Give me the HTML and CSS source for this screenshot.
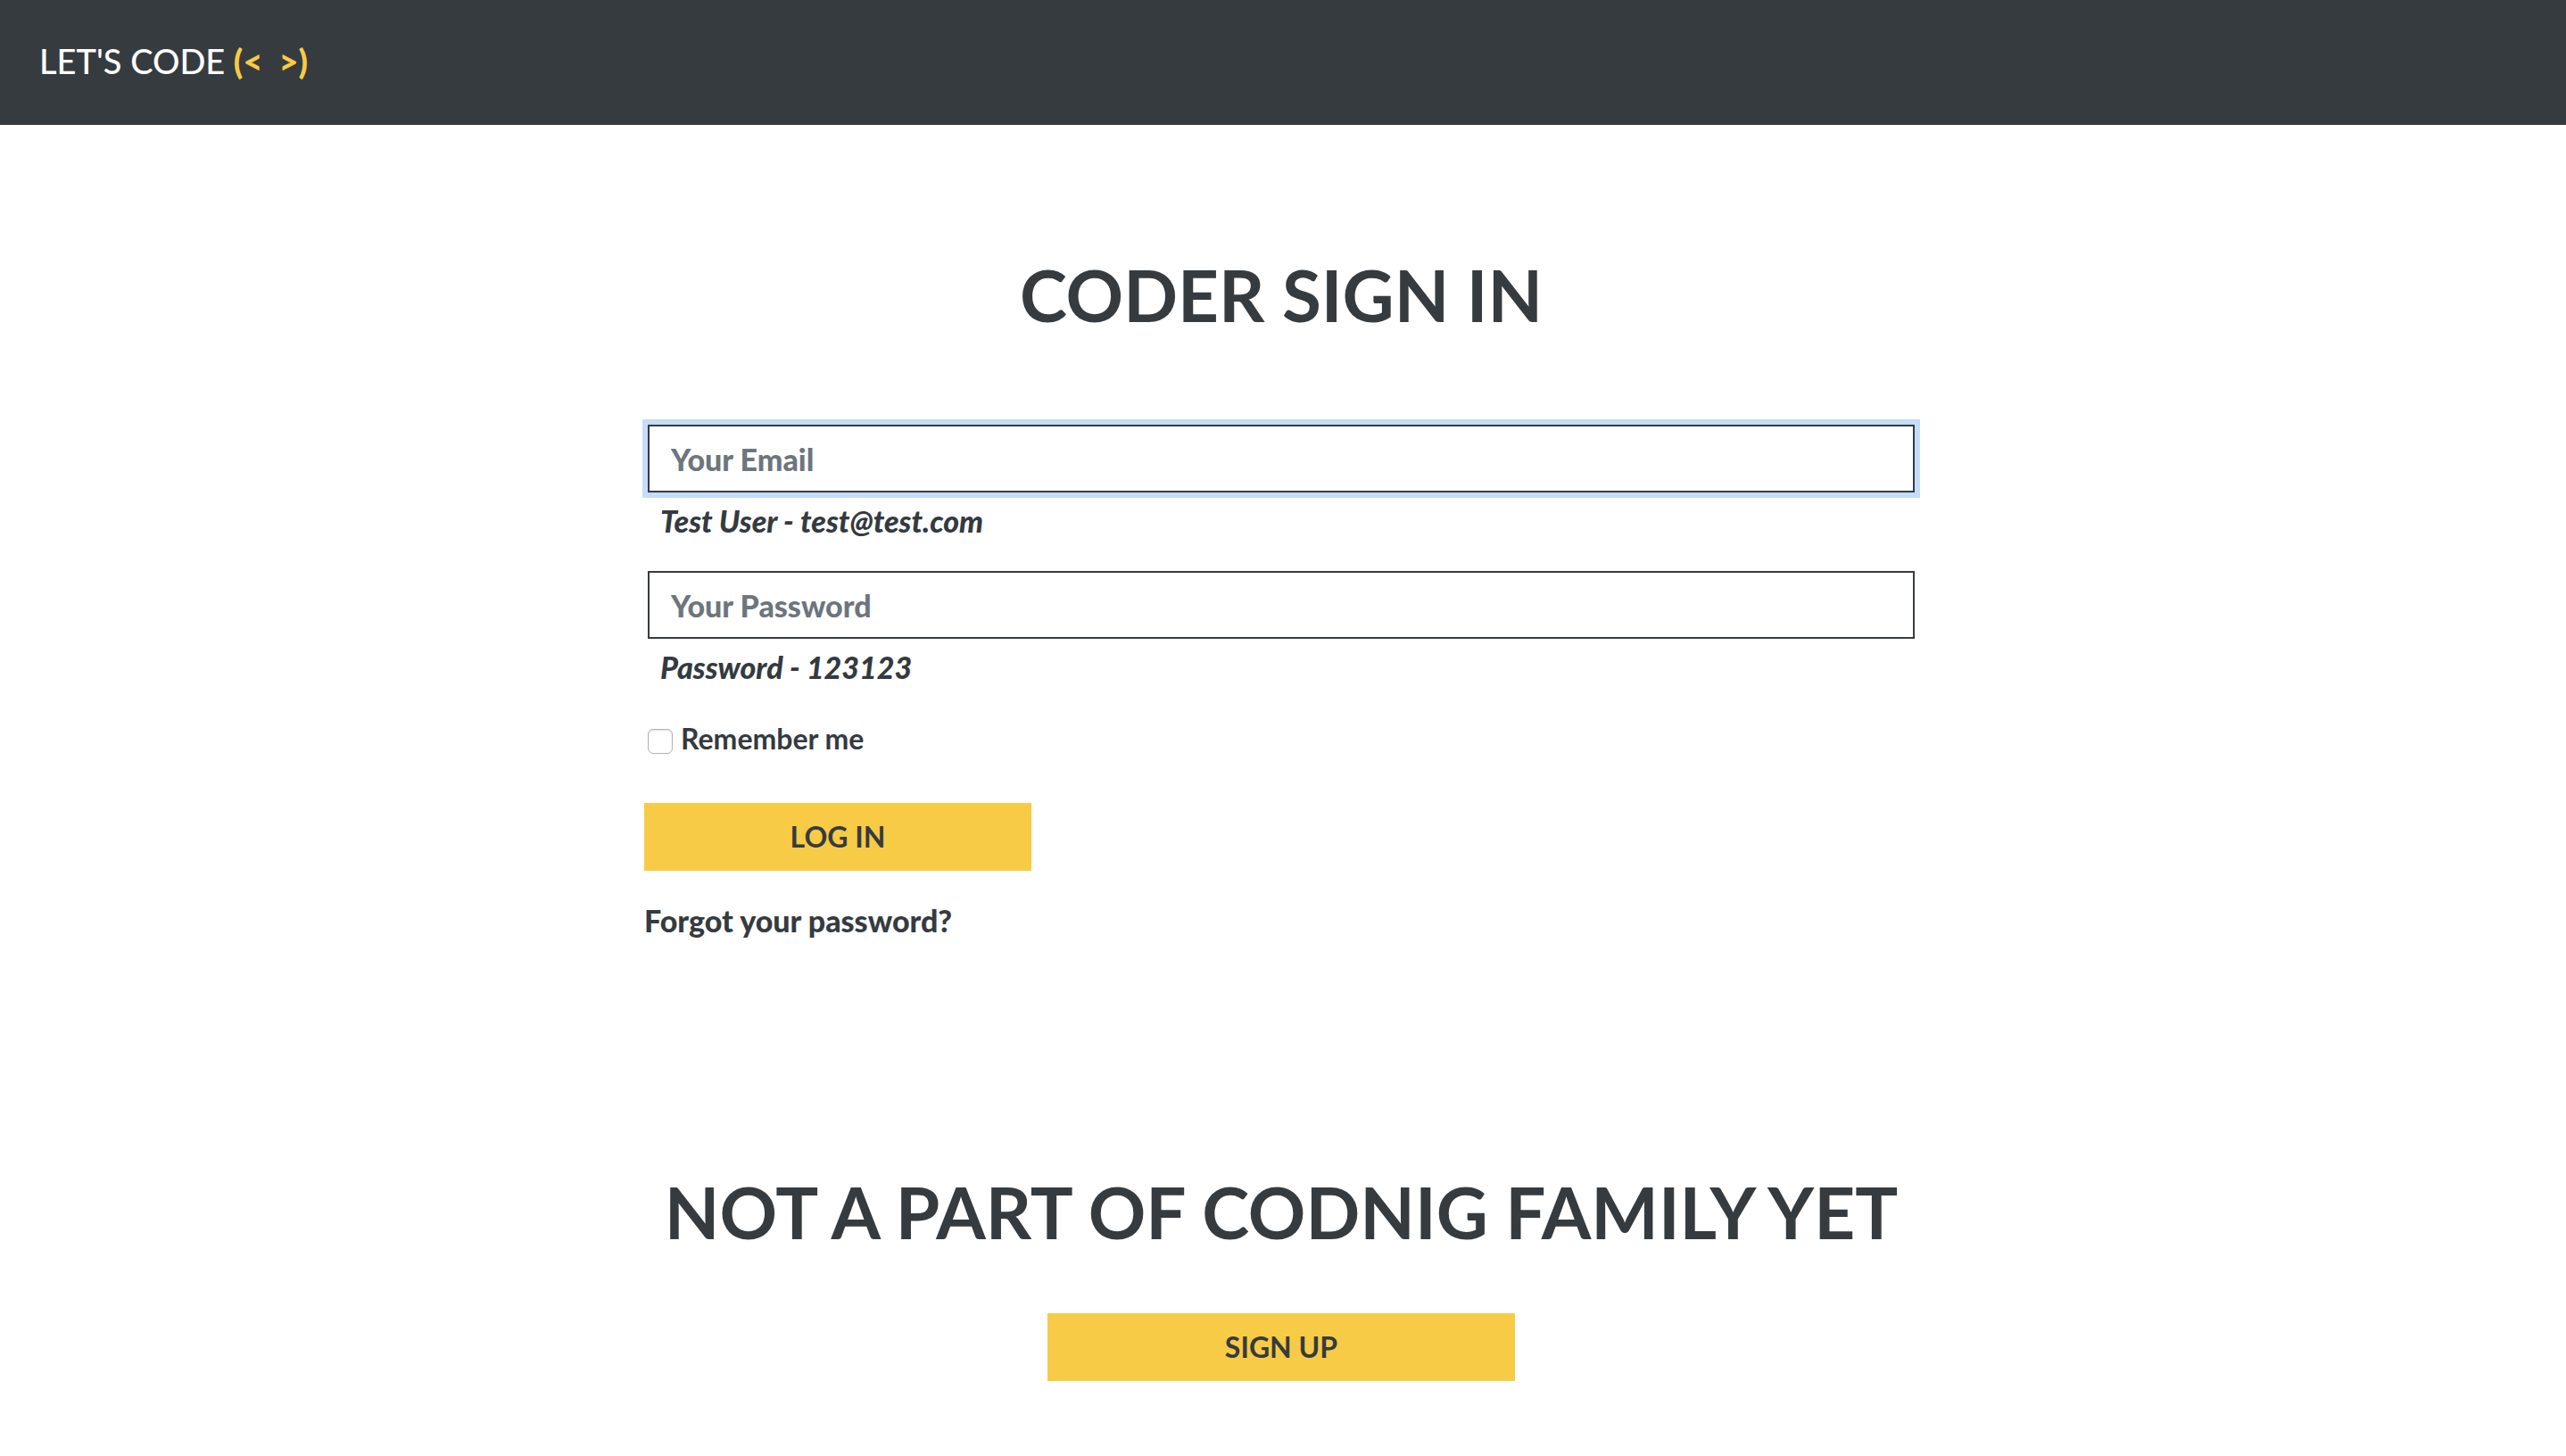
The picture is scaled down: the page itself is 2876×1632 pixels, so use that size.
FILE: index.html
```html
<!DOCTYPE html>
<html lang="en">
<head>
  <meta charset="utf-8">
  <meta name="viewport" content="width=device-width, initial-scale=1">
  <title>Let's Code</title>
  <link rel="stylesheet" href="styles.css">
</head>
<body>
  <header class="navbar">
    <a class="brand" href="#">LET'S CODE <span class="brand-mark">(&lt;&nbsp; &gt;)</span></a>
  </header>
  <main class="page">
    <section class="sign-in">
      <h1 class="title">CODER SIGN IN</h1>
      <form class="form">
        <div class="field">
          <input class="input" type="email" placeholder="Your Email" aria-label="Your Email" aria-describedby="email-hint" autofocus>
          <p class="hint" id="email-hint">Test User - test@test.com</p>
        </div>
        <div class="field">
          <input class="input" type="password" placeholder="Your Password" aria-label="Your Password" aria-describedby="password-hint">
          <p class="hint" id="password-hint">Password - 123123</p>
        </div>
        <div class="remember">
          <input class="checkbox" type="checkbox" id="remember">
          <label for="remember">Remember me</label>
        </div>
        <button class="button button-login" type="submit">LOG IN</button>
        <a class="forgot" href="#">Forgot your password?</a>
      </form>
    </section>
    <section class="sign-up">
      <h2 class="title">NOT A PART OF CODNIG FAMILY YET</h2>
      <button class="button button-signup" type="button">SIGN UP</button>
    </section>
  </main>
</body>
</html>
```
FILE: styles.css
```css
* {
  box-sizing: border-box;
}

body {
  margin: 0;
  background: #fff;
  color: #343a40;
  font: 700 32px/48px Lato, sans-serif;
}

.navbar {
  display: flex;
  align-items: center;
  padding: 40px 44px 44px;
  background: #363b3f;
}

.brand {
  color: #fff;
  font: 500 38px/56px Lato, sans-serif;
  text-decoration: none;
}

.brand-mark {
  color: #f7cb45;
  font-weight: 900;
}

.page {
  display: flex;
  flex-direction: column;
  align-items: center;
  gap: 254px;
  padding: 142px 4px 84px 0;
}

.sign-in {
  width: 100%;
  max-width: 1428px;
}

.title {
  margin: 0;
  color: #363b3f;
  font-size: 80px;
  line-height: 96px;
  text-align: center;
}

.form {
  display: flex;
  flex-direction: column;
  align-items: flex-start;
  padding-top: 98px;
}

.field {
  width: 100%;
  padding: 0 4px 32px;
}

.input {
  display: block;
  width: 100%;
  height: 76px;
  padding: 0 24px;
  border: 2px solid #363b3f;
  border-radius: 0;
  background: #fff;
  color: #363b3f;
  font: inherit;
  font-size: 34px;
  font-weight: 900;
}

.input::placeholder {
  color: #6d757d;
  opacity: 1;
}

.input:focus {
  outline: 0;
  box-shadow: 0 0 0 6px #c4ddfb;
}

.hint {
  margin: 0;
  padding: 8px 14px 0;
  font-size: 34px;
  font-style: italic;
  font-weight: 900;
}

.remember {
  display: flex;
  align-items: center;
  gap: 9px;
  padding: 0 4px;
}

.checkbox {
  appearance: none;
  width: 28px;
  height: 28px;
  margin: 6px 0 0;
  border: 1px solid #b2b2b2;
  border-radius: 6px;
  background: #fff;
  box-shadow: inset 0 1px 2px #ddd;
}

.checkbox:checked {
  background: #363b3f;
}

.button {
  height: 76px;
  padding: 0 24px;
  border: 0;
  background: #f7cb45;
  color: #363b3f;
  font: inherit;
  cursor: pointer;
}

.button-login {
  width: 434px;
  max-width: 100%;
  margin: 48px 0 32px;
}

.forgot {
  color: #363b3f;
  font-size: 34px;
  font-weight: 900;
  text-decoration: none;
}

.sign-up {
  display: flex;
  flex-direction: column;
  align-items: center;
  gap: 66px;
}

.button-signup {
  width: 524px;
  max-width: 100%;
}
```
